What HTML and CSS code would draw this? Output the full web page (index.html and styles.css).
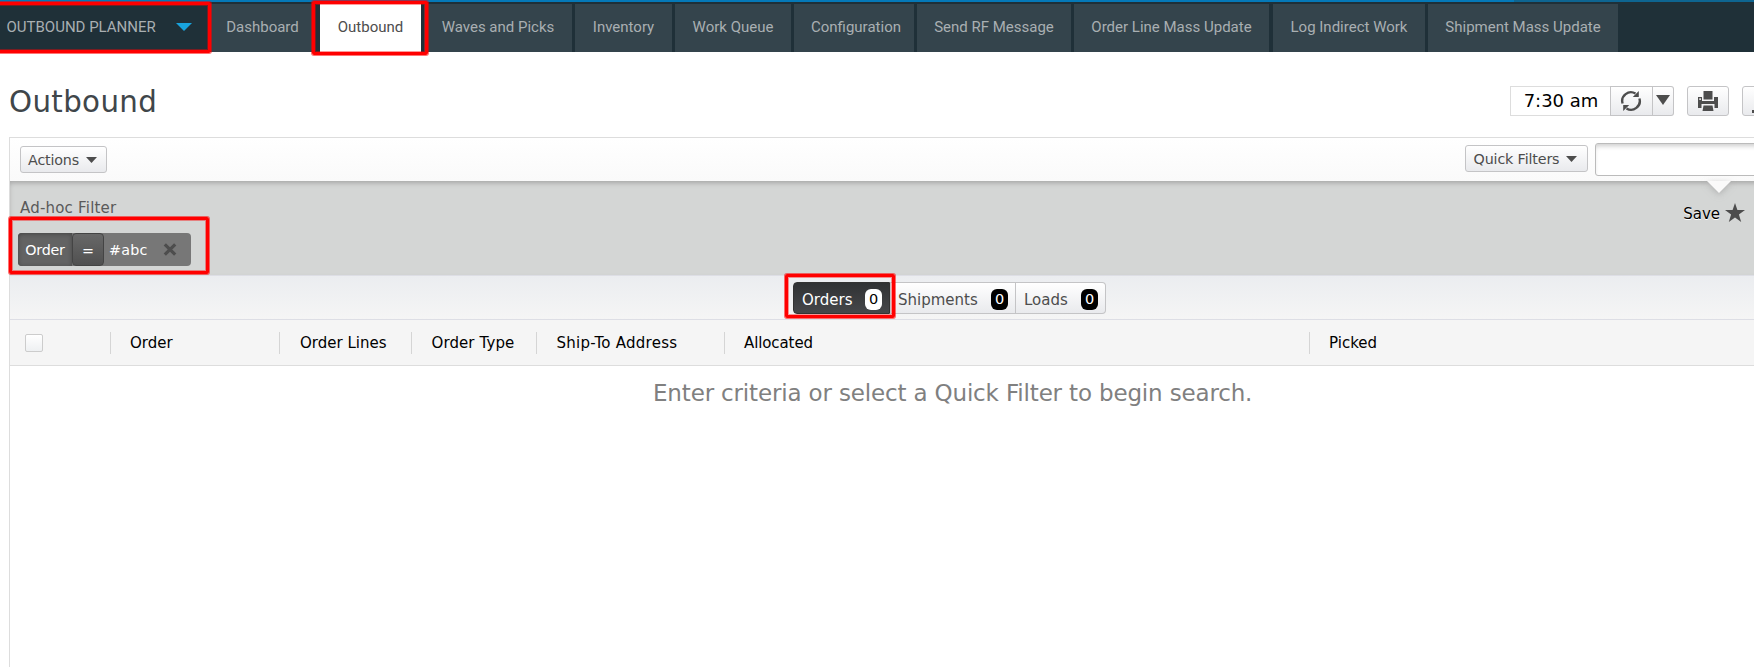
FILE: index.html
```html
<!DOCTYPE html>
<html lang="en">
<head>
<meta charset="utf-8">
<title>Outbound</title>
<link rel="stylesheet" href="styles.css">
</head>
<body>
<div class="progress"><div class="progress-done"></div></div>
<nav class="nav">
  <div class="planner"><span>OUTBOUND PLANNER</span><svg width="16" height="8" viewBox="0 0 16 8"><path d="M0 0h16L8 8z" fill="#18a3dd"/></svg><div class="mark mark-planner"></div></div>
  <a class="tab t-dash">Dashboard</a>
  <a class="tab t-out active">Outbound<span class="mark mark-out"></span></a>
  <a class="tab t-waves">Waves and Picks</a>
  <a class="tab t-inv">Inventory</a>
  <a class="tab t-queue">Work Queue</a>
  <a class="tab t-conf">Configuration</a>
  <a class="tab t-rf">Send RF Message</a>
  <a class="tab t-line">Order Line Mass Update</a>
  <a class="tab t-log">Log Indirect Work</a>
  <a class="tab t-ship">Shipment Mass Update</a>
</nav>
<header class="head">
  <h1>Outbound</h1>
  <div class="tools">
    <div class="time">7:30 am</div>
    <button class="btn refresh"><svg width="22" height="22" viewBox="0 0 22 22"><g fill="none" stroke="#4d4d4d" stroke-width="2.4"><path d="M2.600 13.500A8.700 8.700 0 0 1 15.500 3.600"/><path d="M19.400 8.500A8.700 8.700 0 0 1 6.500 18.400"/></g><path d="M18.800 1v6h-6zM3.200 21v-6h6z" fill="#4d4d4d"/></svg></button>
    <button class="btn more"><svg width="14" height="10" viewBox="0 0 14 10"><path d="M0 0h14L7 10z" fill="#4d4d4d"/></svg></button>
    <button class="btn print"><svg width="20" height="20" viewBox="0 0 20 20" fill="#4d4d4d"><path d="M5.500 0h9v8.500h-9zM0 6h4v4h12V6h4v11h-3.500v-4h-13v4H0zM5.500 14.500h9l1 5.500h-11z"/><path d="M1.300 7.300h1.600v1.600H1.300z" fill="#eee"/></svg></button>
    <button class="btn export"><svg width="20" height="20" viewBox="0 0 20 20"><path d="M0 20v-3h14v3z" fill="#4d4d4d"/></svg></button>
  </div>
</header>
<main class="panel">
  <div class="toolbar">
    <button class="btn actions">Actions<svg width="11" height="6" viewBox="0 0 11 6"><path d="M0 0h11L5.500 6z" fill="#4d4d4d"/></svg></button>
    <div class="search">
      <button class="btn quick">Quick Filters<svg width="11" height="6" viewBox="0 0 11 6"><path d="M0 0h11L5.500 6z" fill="#4d4d4d"/></svg></button>
      <div class="input"></div>
    </div>
  </div>
  <section class="filter">
    <svg class="notch" width="24" height="12" viewBox="0 0 24 12"><path d="M0 0h24L12 12z" fill="#fafafa"/></svg>
    <div class="filter-left">
      <div class="filter-title">Ad-hoc Filter</div>
      <div class="chip">
        <span class="chip-name">Order</span><span class="chip-op">=</span><span class="chip-value">#abc</span>
        <svg width="14" height="13" viewBox="0 0 14 13"><path d="M1.800 1.300l10.400 10.400M12.200 1.300L1.800 11.700" stroke="#4d4d4d" stroke-width="3.200"/></svg>
        <div class="mark mark-chip"></div>
      </div>
    </div>
    <div class="save"><span>Save</span><svg width="20" height="19" viewBox="0 0 20 19"><path d="M10 0l2.400 7H20l-6.100 4.400L16.200 19 10 14.400 3.800 19l2.300-7.600L0 7h7.600z" fill="#4d4d4d"/></svg></div>
  </section>
  <div class="views">
    <div class="seg dark"><span>Orders</span><b>0</b><div class="mark mark-orders"></div></div>
    <div class="seg ship"><span>Shipments</span><b>0</b></div>
    <div class="seg loads"><span>Loads</span><b>0</b></div>
  </div>
  <div class="columns">
    <div class="col c-check"><i class="check"></i></div>
    <div class="col c-order">Order</div>
    <div class="col c-lines">Order Lines</div>
    <div class="col c-type">Order Type</div>
    <div class="col c-addr">Ship-To Address</div>
    <div class="col c-alloc">Allocated</div>
    <div class="col c-picked">Picked</div>
  </div>
  <div class="empty">Enter criteria or select a Quick Filter to begin search.</div>
</main>
</body>
</html>
```
FILE: styles.css
```css
* { box-sizing: border-box; }
body { margin: 0; height: 667px; overflow: hidden; background: #fff; display: flex; flex-direction: column; font: 15px/20px "DejaVu Sans", Verdana, sans-serif; color: #000; }
svg { display: block; flex: none; }
.progress { height: 2px; background: #0e6591; flex: none; }
.progress-done { width: 1514px; height: 2px; background: #0579b8; }
.nav { height: 50px; flex: none; padding-top: 2px; background: #1f3038; display: flex; gap: 3px; font: 15px/18px Roboto, sans-serif; color: #a9afb2; white-space: nowrap; }
.planner { position: relative; width: 208px; padding: 0 16px 3px 6.5px; display: flex; align-items: center; justify-content: space-between; flex: none; }
.tab { display: flex; align-items: center; justify-content: center; padding-bottom: 3px; background: #34444c; flex: none; }
.active { position: relative; background: #fff; color: #4d4d4d; }
.t-dash { width: 103px; }
.t-out { width: 101px; margin-left: 3px; }
.t-waves { width: 148px; }
.t-inv { width: 97px; }
.t-queue { width: 116px; }
.t-conf { width: 120px; padding-left: 4px; }
.t-rf { width: 154px; }
.t-line { width: 195px; }
.t-log { width: 152px; margin-left: 1px; }
.t-ship { width: 190px; }
.mark { position: absolute; border: 3px solid #f00; border-radius: 2px; z-index: 2; box-shadow: 0 0 0 1px rgba(255,0,0,.55), inset 0 0 0 1px rgba(255,0,0,.4); }
.mark-planner { left: -4px; top: -2px; width: 215px; height: 51px; }
.mark-out { left: -8px; top: -3px; width: 116px; height: 54px; }
.head { height: 85px; flex: none; display: flex; justify-content: space-between; padding-left: 9px; overflow: hidden; }
h1 { margin: 30px 0 0; font-weight: 400; font-size: 29.3px; letter-spacing: .35px; line-height: 40px; height: 40px; color: #40464a; }
.tools { display: flex; width: 244px; margin-top: 34px; height: 30px; flex: none; }
.btn { font: 14.3px/20px "DejaVu Sans", Verdana, sans-serif; color: #4d4d4d; border: 1px solid #c4c4c6; border-radius: 3px; background: linear-gradient(#fff, #e9eaed); display: flex; align-items: center; justify-content: center; padding: 0; flex: none; white-space: nowrap; }
.time { width: 100px; flex: none; border: 1px solid #ddd; border-right: 0; font-size: 18px; line-height: 27px; text-align: center; padding-left: 1px; white-space: nowrap; }
.refresh { width: 43px; border-radius: 0; padding-right: 1px; }
.more { width: 21px; border-left: 0; border-radius: 0 3px 3px 0; padding-bottom: 3px; }
.print { width: 42px; margin-left: 13px; padding-right: 1px; }
.export { width: 42px; margin-left: 13px; justify-content: flex-start; padding: 4px 0 0 9px; }
.panel { margin-left: 9px; flex: 1; border-left: 1px solid #ddd; border-top: 1px solid #ddd; min-height: 0; }
.toolbar { height: 43px; background: linear-gradient(#fff, #fafafa); display: flex; justify-content: space-between; padding-left: 10px; }
.actions { width: 87px; height: 27px; margin-top: 8px; gap: 7px; padding-right: 2px; letter-spacing: -.2px; }
.search { display: flex; width: 289px; overflow: hidden; }
.quick { width: 123px; height: 27px; margin-top: 7px; gap: 7px; padding-right: 2px; letter-spacing: -.15px; }
.input { width: 170px; flex: none; margin: 5px 0 0 7px; height: 33px; border: 1px solid #bbb; border-radius: 3px; background: #fff; box-shadow: inset 0 4px 5px -2px #ccc; }
.filter { position: relative; height: 94px; margin-right: -10px; background: #d4d6d5; box-shadow: inset 0 3px 5px -1px #a5a5a5; display: flex; justify-content: space-between; }
.notch { position: absolute; left: 1697px; top: 0; filter: drop-shadow(0 2px 3px #9999); }
.filter-left { padding: 17px 0 0 8px; }
.filter-title { color: #5a5a5a; padding-left: 2px; height: 35px; white-space: nowrap; letter-spacing: .2px; }
.chip { position: relative; width: 173px; height: 33px; border-radius: 4px; background: #777; color: #fff; display: flex; align-items: center; font-size: 14.3px; }
.chip-name { width: 54px; height: 33px; line-height: 34px; text-align: center; border-radius: 4px 0 0 4px; background: #636363; box-shadow: inset 0 1px 4px #444; letter-spacing: -.2px; }
.chip-op { width: 32px; height: 33px; line-height: 35px; text-align: center; border: 1px solid #444; border-radius: 4px; background: linear-gradient(#686868, #505050); }
.chip-value { width: 59px; padding-left: 5px; letter-spacing: .2px; }
.mark-chip { left: -9px; top: -16px; width: 200px; height: 57px; }
.save { display: flex; padding: 21px 19px 0 0; gap: 5px; height: 42px; align-items: center; font-size: 15px; text-shadow: 0 1px #fff; }
.save span { padding-top: 3px; }
.views { height: 45px; border-top: 1px solid #dddee5; border-bottom: 1px solid #dddee5; background: linear-gradient(#ebedf0, #f5f5f5); display: flex; padding: 6px 0 0 783px; }
.seg { height: 32px; display: flex; align-items: center; justify-content: space-between; border: 1px solid #c4c4c6; background: linear-gradient(#fff, #e9eaed); color: #4d4d4d; padding: 0 7px 0 8px; }
.seg b { width: 17px; height: 21px; border-radius: 6px; background: #000; color: #fff; font-weight: 400; text-align: center; line-height: 21px; margin-top: 2px; font-size: 14.5px; }
.seg span { padding-top: 3px; }
.dark { position: relative; width: 97px; background: linear-gradient(#303234, #46474a); color: #fff; border-color: #333; border-radius: 4px 0 0 4px; }
.dark b { background: #fff; color: #000; }
.ship { width: 126px; padding-left: 7px; }
.loads { width: 90px; border-left: 0; border-radius: 0 4px 4px 0; }
.mark-orders { left: -9px; top: -9px; width: 110px; height: 44px; }
.columns { height: 46px; background: #f5f5f5; border-bottom: 1px solid #ddd; display: flex; align-items: center; }
.col { height: 22px; line-height: 22px; border-left: 1px solid #d5d5d5; padding-left: 19px; flex: none; white-space: nowrap; }
.c-check { width: 100px; border: 0; padding: 2px 0 0 15px; }
.check { display: block; width: 18px; height: 18px; border: 1px solid #ccc; border-radius: 2px; background: linear-gradient(#fff, #eef0f2); }
.c-order { width: 169px; }
.c-lines { width: 132px; padding-left: 20px; }
.c-type { width: 125px; padding-left: 19.5px; letter-spacing: .1px; }
.c-addr { width: 188px; padding-left: 19.5px; letter-spacing: .25px; }
.c-alloc { width: 585px; letter-spacing: -.1px; }
.empty { padding: 12px 0 0 643px; font-size: 23px; letter-spacing: -.16px; line-height: 30px; color: #808080; white-space: nowrap; }
```
